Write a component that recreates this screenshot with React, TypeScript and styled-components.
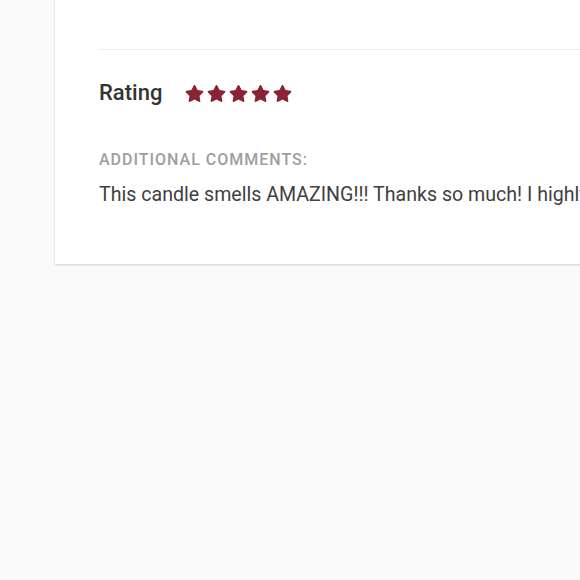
import React from "react"
import styled, { createGlobalStyle } from "styled-components"
import { FaStar } from "react-icons/fa"

const GlobalStyle = createGlobalStyle`
	html, body {
		margin: 0;
		padding: 0;
		background: #fafafa;
		overflow: hidden;
		font-family: Roboto, "Noto Sans", sans-serif;
	}
`

const PageElement = styled.div`
	width: 580px;
	height: 580px;
	overflow: hidden;
	padding-left: 55px;
	box-sizing: border-box;
`

const CardElement = styled.div`
	width: 760px;
	margin-top: -40px;
	background: #ffffff;
	box-shadow: 0 1px 3px rgba(0, 0, 0, 0.14), 0 1px 1px rgba(0, 0, 0, 0.04);
	padding: 89px 0 58px 44px;
`

const DividerElement = styled.hr`
	margin: 0;
	border: none;
	border-top: 1px solid #ececec;
`

const RatingRowElement = styled.div`
	display: flex;
	align-items: center;
	gap: 23px;
	margin-top: 30px;
`

const RatingLabelElement = styled.span`
	font-size: 22px;
	font-weight: 500;
	color: #333333;
`

const StarsElement = styled.div`
	display: flex;
	gap: 3px;
	margin-top: 1px;
`

const StarElement = styled(FaStar)`
	width: 19px;
	height: 17px;
	color: #8a2333;
`

const CommentsLabelElement = styled.div`
	margin-top: 45px;
	font-size: 16px;
	font-weight: 500;
	letter-spacing: 1px;
	text-transform: uppercase;
	color: #9e9e9e;
`

const CommentsTextElement = styled.p`
	margin: 14px 0 0;
	font-size: 19.6px;
	color: #404040;
	white-space: nowrap;
`

function App() {
	const rating = 5

	return (
		<>
			<GlobalStyle />
			<PageElement>
				<CardElement>
					<DividerElement />
					<RatingRowElement>
						<RatingLabelElement>Rating</RatingLabelElement>
						<StarsElement>
							{Array.from({ length: rating }).map((_, index) => <StarElement key={index} />)}
						</StarsElement>
					</RatingRowElement>
					<CommentsLabelElement>Additional comments:</CommentsLabelElement>
					<CommentsTextElement>
						This candle smells AMAZING!!! Thanks so much! I highly recommend this shop to everyone.
					</CommentsTextElement>
				</CardElement>
			</PageElement>
		</>
	)
}

export default App
